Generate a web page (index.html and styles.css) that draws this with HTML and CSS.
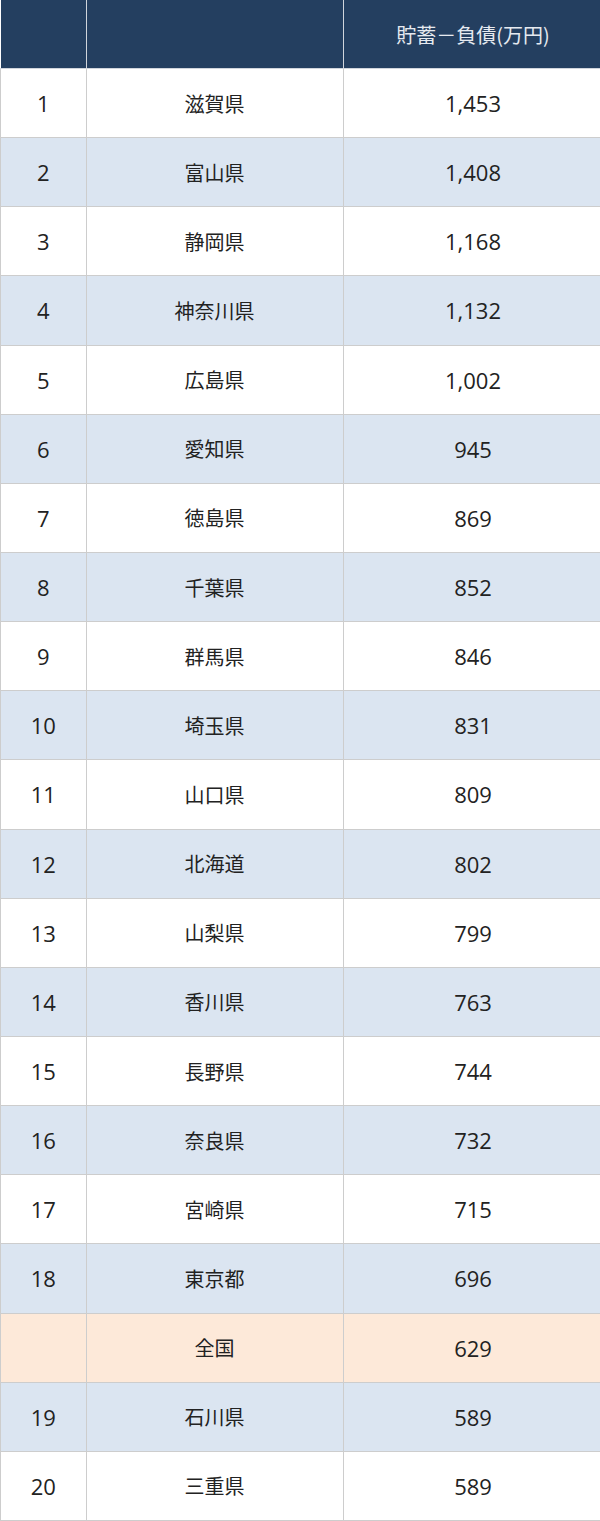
FILE: index.html
```html
<!DOCTYPE html>
<html lang="ja">
<head>
<meta charset="utf-8">
<link rel="stylesheet" href="styles.css">
</head>
<body>
<table class="rank">
  <thead>
    <tr><th class="c1"></th><th class="c2"></th><th class="c3">貯蓄－負債(万円)</th></tr>
  </thead>
  <tbody>
    <tr><td>1</td><td>滋賀県</td><td>1,453</td></tr>
    <tr class="alt"><td>2</td><td>富山県</td><td>1,408</td></tr>
    <tr><td>3</td><td>静岡県</td><td>1,168</td></tr>
    <tr class="alt"><td>4</td><td>神奈川県</td><td>1,132</td></tr>
    <tr><td>5</td><td>広島県</td><td>1,002</td></tr>
    <tr class="alt"><td>6</td><td>愛知県</td><td>945</td></tr>
    <tr><td>7</td><td>徳島県</td><td>869</td></tr>
    <tr class="alt"><td>8</td><td>千葉県</td><td>852</td></tr>
    <tr><td>9</td><td>群馬県</td><td>846</td></tr>
    <tr class="alt"><td>10</td><td>埼玉県</td><td>831</td></tr>
    <tr><td>11</td><td>山口県</td><td>809</td></tr>
    <tr class="alt"><td>12</td><td>北海道</td><td>802</td></tr>
    <tr><td>13</td><td>山梨県</td><td>799</td></tr>
    <tr class="alt"><td>14</td><td>香川県</td><td>763</td></tr>
    <tr><td>15</td><td>長野県</td><td>744</td></tr>
    <tr class="alt"><td>16</td><td>奈良県</td><td>732</td></tr>
    <tr><td>17</td><td>宮崎県</td><td>715</td></tr>
    <tr class="alt"><td>18</td><td>東京都</td><td>696</td></tr>
    <tr class="nat"><td></td><td>全国</td><td>629</td></tr>
    <tr class="alt"><td>19</td><td>石川県</td><td>589</td></tr>
    <tr><td>20</td><td>三重県</td><td>589</td></tr>
  </tbody>
</table>
</body>
</html>
```
FILE: styles.css
```css
html, body {
  margin: 0;
  padding: 0;
  background: #ffffff;
}
.rank {
  width: 600px;
  height: 1521px;
  border-collapse: collapse;
  table-layout: fixed;
  font-family: "Open Sans", "Noto Sans CJK JP", sans-serif;
  color: #222222;
}
.rank th, .rank td {
  border: 1px solid #cdcdcd;
  text-align: center;
  vertical-align: middle;
  padding: 0;
  height: 68px;
  font-size: 22px;
}
.rank td:nth-child(2) {
  font-size: 20px;
  font-family: "Noto Sans CJK JP", sans-serif;
}
.rank .c1 { width: 85px; }
.rank .c2 { width: 256px; }
.rank .c3 { width: 259px; }
.rank thead th {
  background: #243f60;
  color: #e6eaf0;
  font-weight: normal;
  font-size: 20px;
  font-family: "Noto Sans CJK JP", sans-serif;
  border-color: #d0d5dc;
  border-top: none;
}
.rank thead th:first-child { border-left: none; }
.rank tr.alt td { background: #dbe5f1; }
.rank tr.nat td { background: #fde9d9; }
```
